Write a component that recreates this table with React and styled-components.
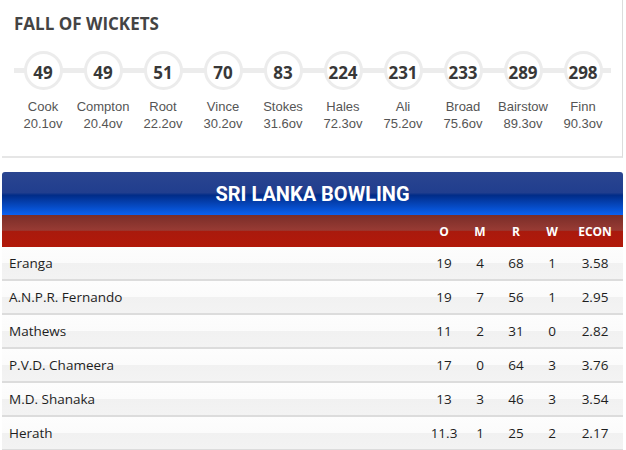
import styled, { createGlobalStyle } from "styled-components";

const GlobalStyle = createGlobalStyle`
  body {
    margin: 0;
    background: #fff;
    font-family: "Open Sans", "Liberation Sans", sans-serif;
  }
`;

const Page = styled.div`
  width: 621px;
  padding-left: 2px;
`;

const Card = styled.section`
  height: 144px;
  padding-top: 12px;
  border-right: 1px solid #dcdcdc;
  border-bottom: 2px solid #e6e6e6;
`;

const CardTitle = styled.h2`
  margin: 0 0 15px 12px;
  font-size: 17px;
  line-height: 24px;
  font-weight: 700;
  color: #444;
`;

const Track = styled.div`
  position: relative;
  display: flex;
  padding-left: 11px;

  &::before {
    content: "";
    position: absolute;
    left: 12px;
    right: 11px;
    top: 17px;
    height: 5px;
    background: #ececec;
  }
`;

const Wicket = styled.div`
  position: relative;
  width: 60px;
  display: flex;
  flex-direction: column;
  align-items: center;
`;

const Circle = styled.div`
  width: 33px;
  height: 30px;
  padding-top: 3px;
  border: 3px solid #ececec;
  border-radius: 50%;
  background: #fff;
  display: flex;
  align-items: center;
  justify-content: center;
  font-size: 17px;
  font-weight: 700;
  color: #383838;
`;

const Batter = styled.div`
  margin-top: 8px;
  font-family: "Liberation Sans", Arial, sans-serif;
  font-size: 13px;
  line-height: 17px;
  color: #555;
  text-align: center;
  white-space: nowrap;
`;

const Table = styled.section`
  margin-top: 14px;
`;

const Banner = styled.div`
  height: 43px;
  border-radius: 3px 3px 0 0;
  background: linear-gradient(
    to bottom,
    #2a4590 0%,
    #213e8e 48%,
    #012c88 54%,
    #0a62f2 100%
  );
  display: flex;
  align-items: center;
  justify-content: center;
  font-family: Roboto, "Open Sans", sans-serif;
  font-size: 20px;
  font-weight: 700;
  color: #fff;
`;

const Grid = styled.div`
  display: grid;
  grid-template-columns: 1fr 36px 36px 36px 36px 50px;
  align-items: center;
  padding: 0 3px 0 7px;
`;

const HeadRow = styled(Grid)`
  height: 32px;
  background: linear-gradient(
    to bottom,
    #7a2d28 0%,
    #983b34 48%,
    #a91a0d 50%,
    #b2190a 100%
  );
  font-size: 12px;
  font-weight: 700;
  color: #fff;
`;

const Row = styled(Grid)`
  height: 32px;
  border-bottom: 2px solid #dcdcdc;
  background: linear-gradient(
    to bottom,
    #fdfdfd 0%,
    #fbfbfb 50%,
    #f1f1f1 50%,
    #f3f3f3 100%
  );
  font-size: 13.5px;
  color: #1e1e1e;
`;

const Cell = styled.div`
  text-align: ${(p) => (p.$left ? "left" : "center")};
  white-space: nowrap;
`;

const wickets = [
  ["49", "Cook", "20.1ov"],
  ["49", "Compton", "20.4ov"],
  ["51", "Root", "22.2ov"],
  ["70", "Vince", "30.2ov"],
  ["83", "Stokes", "31.6ov"],
  ["224", "Hales", "72.3ov"],
  ["231", "Ali", "75.2ov"],
  ["233", "Broad", "75.6ov"],
  ["289", "Bairstow", "89.3ov"],
  ["298", "Finn", "90.3ov"],
];

const bowlers = [
  ["Eranga", "19", "4", "68", "1", "3.58"],
  ["A.N.P.R. Fernando", "19", "7", "56", "1", "2.95"],
  ["Mathews", "11", "2", "31", "0", "2.82"],
  ["P.V.D. Chameera", "17", "0", "64", "3", "3.76"],
  ["M.D. Shanaka", "13", "3", "46", "3", "3.54"],
  ["Herath", "11.3", "1", "25", "2", "2.17"],
];

export default function App() {
  return (
    <Page>
      <GlobalStyle />
      <Card>
        <CardTitle>FALL OF WICKETS</CardTitle>
        <Track>
          {wickets.map(([score, name, overs], i) => (
            <Wicket key={i}>
              <Circle>{score}</Circle>
              <Batter>
                {name}
                <br />
                {overs}
              </Batter>
            </Wicket>
          ))}
        </Track>
      </Card>
      <Table>
        <Banner>SRI LANKA BOWLING</Banner>
        <HeadRow>
          <Cell $left />
          <Cell>O</Cell>
          <Cell>M</Cell>
          <Cell>R</Cell>
          <Cell>W</Cell>
          <Cell>ECON</Cell>
        </HeadRow>
        {bowlers.map((b) => (
          <Row key={b[0]}>
            {b.map((v, i) => (
              <Cell key={i} $left={i === 0}>
                {v}
              </Cell>
            ))}
          </Row>
        ))}
      </Table>
    </Page>
  );
}
